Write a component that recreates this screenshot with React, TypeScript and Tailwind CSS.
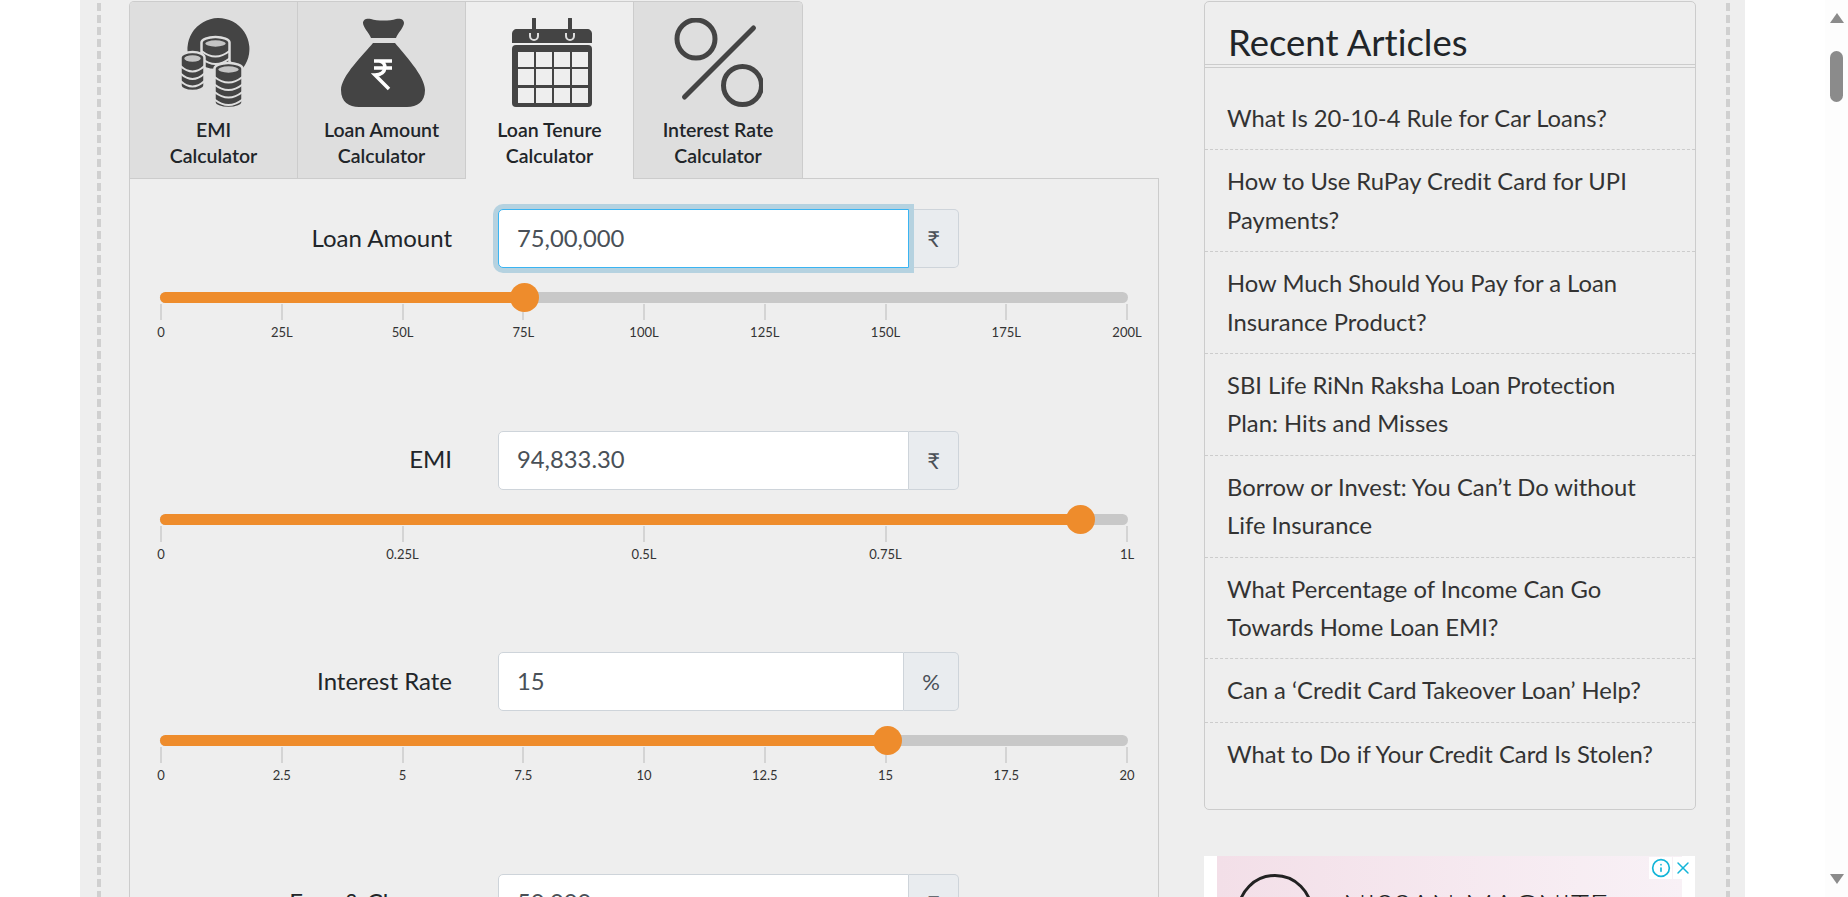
import { X, Info } from "lucide-react";

// ─── Data ─────────────────────────────────────────────────────────────────────

const TABS = [
  { top: "EMI", icon: <CoinsIcon />, active: false, width: "w-[167px]" },
  { top: "Loan Amount", icon: <BagIcon />, active: false, width: "w-[168px]" },
  { top: "Loan Tenure", icon: <CalendarIcon />, active: true, width: "w-[168px]" },
  { top: "Interest Rate", icon: <PercentIcon />, active: false, width: "w-[169px]" },
];

const ROWS = [
  { label: "Loan Amount", value: "75,00,000", unit: "₹", pct: 37.6, focus: true, ticks: ["0", "25L", "50L", "75L", "100L", "125L", "150L", "175L", "200L"] },
  { label: "EMI", value: "94,833.30", unit: "₹", pct: 95, focus: false, ticks: ["0", "0.25L", "0.5L", "0.75L", "1L"] },
  { label: "Interest Rate", value: "15", unit: "%", pct: 75.1, focus: false, ticks: ["0", "2.5", "5", "7.5", "10", "12.5", "15", "17.5", "20"] },
  { label: "Fees & Charges", value: "50,000", unit: "₹", pct: 10, focus: false, ticks: ["0"] },
];

const ARTICLES = [
  "What Is 20-10-4 Rule for Car Loans?",
  "How to Use RuPay Credit Card for UPI Payments?",
  "How Much Should You Pay for a Loan Insurance Product?",
  "SBI Life RiNn Raksha Loan Protection Plan: Hits and Misses",
  "Borrow or Invest: You Can’t Do without Life Insurance",
  "What Percentage of Income Can Go Towards Home Loan EMI?",
  "Can a ‘Credit Card Takeover Loan’ Help?",
  "What to Do if Your Credit Card Is Stolen?",
];

// ─── Tab icons ────────────────────────────────────────────────────────────────

function Stack({ cx, top, bottom, w }: { cx: number; top: number; bottom: number; w: number }) {
  const l = cx - w / 2;
  const r = cx + w / 2;
  const ry = 5.5;
  const bands = [];
  for (let y = top + 14; y < bottom - 7; y += 7.5) {
    bands.push(<path key={y} d={`M${l} ${y}Q${cx} ${y + 2 * ry} ${r} ${y}`} fill="none" stroke="#dedede" strokeWidth="2" />);
  }
  return (
    <g>
      <path d={`M${l} ${top + ry}A${w / 2} ${ry} 0 0 1 ${r} ${top + ry}V${bottom - ry}A${w / 2} ${ry} 0 0 1 ${l} ${bottom - ry}Z`} fill="#444" stroke="#dedede" strokeWidth="2.5" />
      <ellipse cx={cx} cy={top + ry + 1} rx={w / 2 - 3} ry={ry - 1.5} fill="#c4c4c4" stroke="#444" strokeWidth="1.5" />
      {bands}
    </g>
  );
}

function CoinsIcon() {
  return (
    <svg width="90" height="90" viewBox="0 0 90 90">
      <path d="M19 37A31 31 0 1 1 74 50L50 37Z" fill="#444" />
      <Stack cx={46.5} top={19} bottom={52} w={28} />
      <Stack cx={23.5} top={34} bottom={73} w={24} />
      <Stack cx={59.5} top={45} bottom={90} w={28} />
    </svg>
  );
}

function BagIcon() {
  return (
    <svg width="90" height="90" viewBox="0 0 90 90">
      <path d="M26 5C26 1 30 0 34 1C40 3 53 3 59 1C63 0 67 1 67 5C67 9 61 15 59 20H34C32 15 26 9 26 5Z" fill="#444" />
      <path d="M36 25H58C67 36 88 58 88 72C88 84 80 89 70 89H22C12 89 4 84 4 72C4 58 27 36 36 25Z" fill="#444" />
      <path d="M37 43H55M37 50H55M42 43C50 43 51 57 38 57L52 71" fill="none" stroke="#fff" strokeWidth="3.5" />
    </svg>
  );
}

function CalendarIcon() {
  const cols = [13, 31, 49, 67];
  const rows = [34, 51, 70];
  return (
    <svg width="90" height="90" viewBox="0 0 90 90">
      <path d="M7 25V16C7 13 9 11 12 11H82C85 11 87 13 87 16V25Z" fill="#444" />
      <rect x="7" y="27" width="80" height="62" rx="4" fill="#444" />
      {cols.map((x) =>
        rows.map((y) => <rect key={`${x}-${y}`} x={x} y={y} width="16" height={y === 51 ? 16 : 15} fill="#eee" />),
      )}
      <path d="M25 15V18A4 4 0 0 0 33 18V15M61 15V18A4 4 0 0 0 69 18V15" fill="none" stroke="#ddd" strokeWidth="2" />
      <path d="M29 1V19M65 1V19" fill="none" stroke="#444" strokeWidth="4" strokeLinecap="round" />
    </svg>
  );
}

function PercentIcon() {
  return (
    <svg width="90" height="90" viewBox="0 0 90 90" fill="none" stroke="#444" strokeWidth="5">
      <circle cx="23" cy="21" r="19" />
      <circle cx="69.5" cy="67.5" r="19" />
      <path d="M80.5 10L11.5 79" strokeLinecap="round" />
    </svg>
  );
}

// ─── Calculator row ───────────────────────────────────────────────────────────

function SliderRow({ row }: { row: (typeof ROWS)[number] }) {
  return (
    <div className="h-[221.6px]">
      <div className="flex h-[59px] items-center">
        <label className="mb-0.5 w-[322px] text-right text-2xl text-[#212529]">{row.label}</label>
        <div className="ml-[46px] flex h-[59px] w-[461px]">
          {row.focus ? (
            <div className="relative z-10 flex min-w-0 flex-1 items-center rounded-l-[5px] border border-[#3ab4f2] bg-white pl-[18px] text-[23.8px] text-[#495057] shadow-[0_0_0_5px_#b5d2e0]">
              {row.value}
            </div>
          ) : (
            <div className="flex min-w-0 flex-1 items-center rounded-l-[5px] border border-[#ced4da] bg-white pl-[18px] text-[23.8px] text-[#495057]">
              {row.value}
            </div>
          )}
          <div className="flex items-center rounded-r-[5px] border border-l-0 border-[#ced4da] bg-[#e9ecef] px-[18px] text-[22px] text-[#495057]">
            {row.unit}
          </div>
        </div>
      </div>
      <div className="ml-[30px] mt-6 w-[968px]">
        <div className="relative h-[11px] rounded-full bg-[#c8c8c8]">
          <div className="h-full rounded-full bg-[#ee8c2c]" style={{ width: `${row.pct}%` }} />
          <div
            className="absolute top-[-9px] ml-[-14px] h-[29px] w-[29px] rounded-full bg-[#ee8c2c]"
            style={{ left: `${row.pct}%` }}
          />
        </div>
        <div className="mx-px mt-px flex justify-between">
          {row.ticks.map((t) => (
            <div key={t} className="flex w-0 flex-col items-center">
              <div className="h-4 w-0.5 shrink-0 bg-[#d4d4d4]" />
              <span className="mt-[2px] whitespace-nowrap text-[13px] leading-5 text-[#333]">{t}</span>
            </div>
          ))}
        </div>
      </div>
    </div>
  );
}

// ─── Page ─────────────────────────────────────────────────────────────────────

function DashLine() {
  return (
    <div className="mt-[3px] h-[894px] w-1 shrink-0 bg-[repeating-linear-gradient(to_bottom,#d0d0d0_0,#d0d0d0_8px,transparent_8px,transparent_12px)]" />
  );
}

export default function App() {
  return (
    <div className="flex h-[897px] w-[1848px] overflow-hidden bg-white [font-family:Lato,'Noto_Sans',sans-serif] [font-variant-ligatures:none]">
      <div className="w-20 shrink-0" />

      <div className="flex w-[1665px] shrink-0 bg-[#eeeeee] pl-[17px] pr-[15px]">
        <DashLine />

        <main className="ml-7 mt-px w-[1030px] shrink-0">
          {/* Tabs */}
          <div className="flex h-[178px] w-[674px] overflow-hidden rounded-t-[5px] border border-b-0 border-[#ccc]">
            {TABS.map((t, i) => (
              <div
                key={t.top}
                className={[
                  "flex shrink-0 flex-col items-center pt-4 text-center text-[19.5px] font-semibold leading-[26px] text-[#212529]",
                  t.width,
                  t.active ? "bg-[#eeeeee]" : "border-b border-[#ccc] bg-[#dedede]",
                  i > 0 ? "border-l border-[#ccc]" : "",
                ].join(" ")}
              >
                {t.icon}
                <span className="mt-[9px]">{t.top}</span>
                <span>Calculator</span>
              </div>
            ))}
          </div>

          {/* Form */}
          <div className="relative h-[800px] border-x border-[#ccc] pt-[30px]">
            <div className="absolute left-[672px] right-[-1px] top-[-1px] h-px bg-[#ccc]" />
            {ROWS.map((r) => (
              <SliderRow key={r.label} row={r} />
            ))}
          </div>
        </main>

        {/* Sidebar */}
        <aside className="ml-[45px] mt-px w-[492px] shrink-0">
          <div className="h-[809px] rounded-[5px] border border-[#ccc]">
            <h3 className="h-[63px] border-b border-[#ccc] pl-[23px] pt-4 text-[36.5px] leading-[48px] text-[#212529]">
              Recent Articles
            </h3>
            <ul className="mt-0.5 border-t border-[#ccc] pt-[19px]">
              {ARTICLES.map((a, i) => (
                <li
                  key={a}
                  className={[
                    "py-3 pl-[22px] pr-6 text-[23.8px] leading-[38.4px] text-[#333]",
                    i < ARTICLES.length - 1 ? "border-b border-dashed border-[#ccc]" : "",
                  ].join(" ")}
                >
                  {a}
                </li>
              ))}
            </ul>
          </div>

          {/* Ad */}
          <div className="relative mt-[46px] h-[200px] w-[491px] bg-white px-[13px]">
            <div className="flex h-full gap-[30px] bg-gradient-to-r from-[#f3dfe8] to-[#f8f1f6] pl-5 pt-[18px]">
              <div className="h-[76px] w-[76px] shrink-0 rounded-full border-[3px] border-[#222]" />
              <span className="mt-[13px] whitespace-nowrap text-[31px] font-light leading-9 tracking-wide text-[#222]">
                NISSAN MAGNITE
              </span>
            </div>
            <div className="absolute right-0.5 top-px flex gap-px">
              <div className="flex h-[22px] w-[23px] items-center justify-center bg-white">
                <Info size={20} strokeWidth={2} className="text-[#13b5d8]" />
              </div>
              <div className="flex h-[22px] w-5 items-center justify-center bg-white">
                <X size={20} strokeWidth={1.75} className="text-[#13b5d8]" />
              </div>
            </div>
          </div>
        </aside>

        <div className="ml-[30px]">
          <DashLine />
        </div>
      </div>

      <div className="w-20 shrink-0" />

      {/* Scrollbar */}
      <div className="flex w-[23px] shrink-0 flex-col items-center bg-[#fdfdfd] pb-[13px] pt-[13px]">
        <svg width="14" height="10" viewBox="0 0 14 10">
          <path d="M7 0L14 10H0Z" fill="#8b8b8b" />
        </svg>
        <div className="mt-7 h-[51px] w-[13px] rounded-full bg-[#8b8b8b]" />
        <svg width="14" height="10" viewBox="0 0 14 10" className="mt-auto">
          <path d="M7 10L14 0H0Z" fill="#8b8b8b" />
        </svg>
      </div>
    </div>
  );
}
